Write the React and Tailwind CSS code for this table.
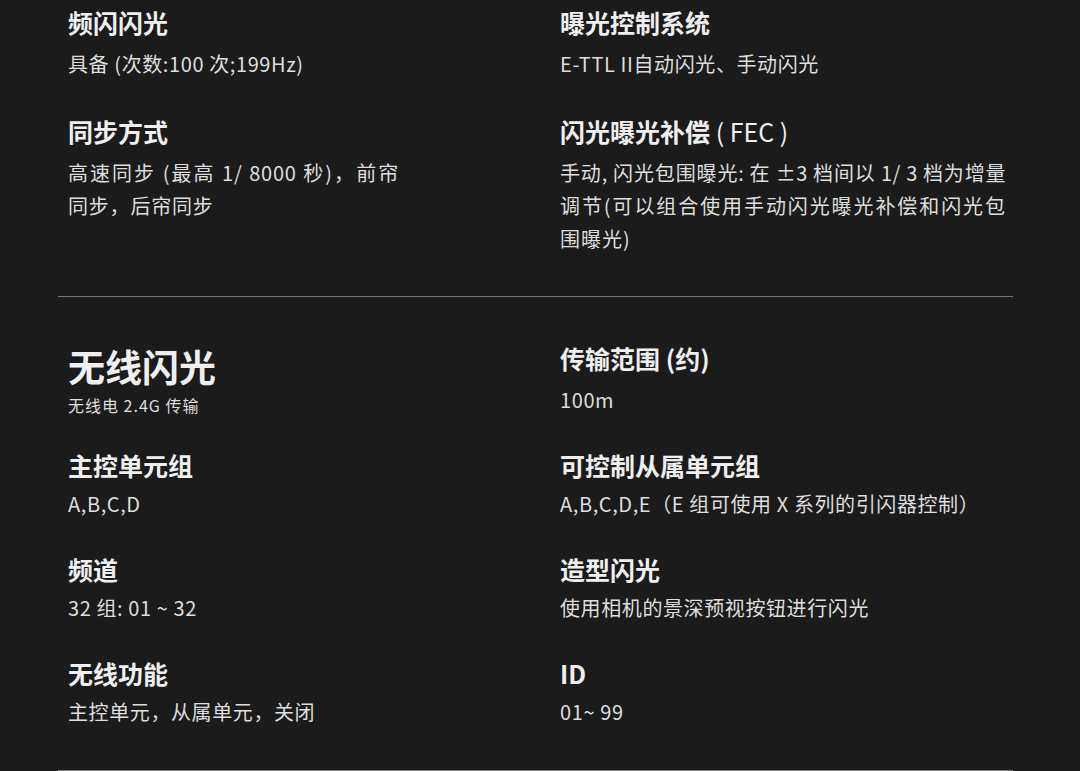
import React from 'react';

const font = { fontFamily: '"Noto Sans CJK SC", "Noto Sans", sans-serif' };

function Spec({ title, extra, children, w, gap = 'mt-[7px]', track = 'tracking-[0.6px]' }) {
  return (
    <div className={w}>
      <h3 className="text-[25px] leading-[36px] font-bold text-[#efefef]">
        {title}
        {extra && <span className="font-normal"> {extra}</span>}
      </h3>
      <p className={`${gap} ${track} text-[20px] leading-[33px] text-[#dedede] text-justify`}>
        {children}
      </p>
    </div>
  );
}

export default function App() {
  const L = 'w-[331px]';
  const R = 'w-[450px]';

  return (
    <div className="min-h-screen bg-[#1b1b1b]" style={font}>
      <div className="w-[955px] ml-[58px]">
        {/* flash specs */}
        <section className="grid grid-cols-[492px_453px] gap-y-[33px] pl-[10px] pt-[4px] pb-[41px] border-b border-[#777]">
          <Spec title="频闪闪光" w={L}>具备 (次数:100 次;199Hz)</Spec>
          <Spec title="曝光控制系统" w={R}>E-TTL II自动闪光、手动闪光</Spec>
          <Spec title="同步方式" w={L} track="tracking-[0.8px]">
            高速同步 (最高 1/ 8000 秒)，前帘同步，后帘同步
          </Spec>
          <Spec title="闪光曝光补偿" extra="( FEC )" w="w-[446px]" track="tracking-[0.4px]">
            手动, 闪光包围曝光: 在 ±3 档间以 1/ 3 档为增量
            <span className="tracking-[1px]">调节(可以组合使用手动闪光曝光补偿和闪光包围曝光)</span>
          </Spec>
        </section>

        {/* wireless */}
        <section className="grid grid-cols-[492px_453px] gap-y-[31px] pl-[10px] pt-[43px] pb-[42px] border-b border-[#777]">
          <div className="pt-[4px]">
            <h2 className="text-[37px] leading-[44px] font-bold text-[#efefef]">无线闪光</h2>
            <p className="mt-[7px] text-[16px] leading-[20px] tracking-[1px] text-[#dedede]">无线电 2.4G 传输</p>
          </div>
          <Spec title="传输范围 (约)" w={R}>100m</Spec>
          <Spec title="主控单元组" w={L} gap="mt-[4px]">A,B,C,D</Spec>
          <Spec title="可控制从属单元组" w={R} gap="mt-[4px]">A,B,C,D,E（E 组可使用 X 系列的引闪器控制）</Spec>
          <Spec title="频道" w={L} gap="mt-[4px]">32 组: 01 ~ 32</Spec>
          <Spec title="造型闪光" w={R} gap="mt-[4px]">使用相机的景深预视按钮进行闪光</Spec>
          <Spec title="无线功能" w={L} gap="mt-[4px]">主控单元，从属单元，关闭</Spec>
          <Spec title="ID" w={R} gap="mt-[4px]">01~ 99</Spec>
        </section>
      </div>
    </div>
  );
}
